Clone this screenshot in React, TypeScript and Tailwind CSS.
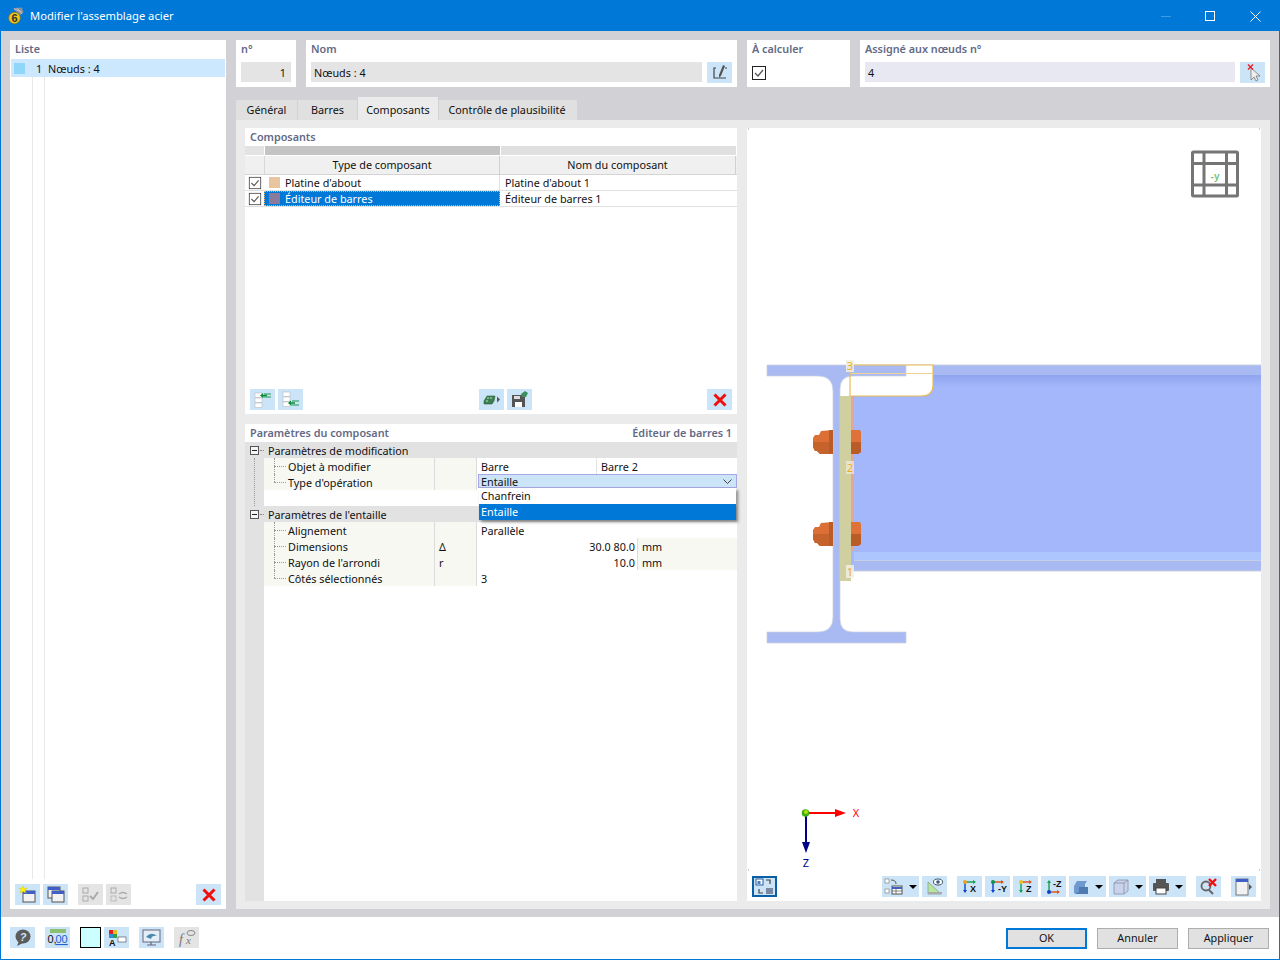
import React from "react";

const FONT = "font-['Noto_Sans','Open_Sans',sans-serif]";

function Btn({ w = "w-[25px]", h = "h-[21px]", gray, active, children }: { w?: string; h?: string; gray?: boolean; active?: boolean; children?: React.ReactNode }) {
  return (
    <div className={`${w} ${h} shrink-0 flex items-center justify-center ${gray ? "bg-[#e4e4e4]" : "bg-[#cce4f7]"} ${active ? "border-2 border-[#0b5fa5]" : ""}`}>
      {children}
    </div>
  );
}

function Ico({ children }: { children: React.ReactNode }) {
  return (
    <svg width="21" height="19" viewBox="0 0 21 19" className="block shrink-0">
      {children}
    </svg>
  );
}

const Caret = () => <span className="ml-[5px] w-0 h-0 border-l-[4px] border-r-[4px] border-t-[4px] border-l-transparent border-r-transparent border-t-black" />;

function Check({ className = "" }: { className?: string }) {
  return (
    <svg width="14" height="14" viewBox="0 0 14 14" className={`block shrink-0 ${className}`}>
      <rect x="0.5" y="0.5" width="13" height="13" fill="#fff" stroke="#222" />
      <path d="M3 7l3 3 5-6" fill="none" stroke="#555" strokeWidth="1.2" />
    </svg>
  );
}

const RedX = () => (
  <svg width="14" height="14" viewBox="0 0 14 14" className="block">
    <path d="M1.500 1.500l11 11M12.500 1.500l-11 11" stroke="#f00f0f" strokeWidth="3" />
  </svg>
);

const ListRows = ({ y }: { y: number }) => (
  <>
    <rect x="3" y={y} width="7" height="4.500" fill="#fff" stroke="#b0b0b0" strokeWidth="0.5" />
    <rect x="3" y={y + 5} width="7" height="4.500" fill="#fff" stroke="#b0b0b0" strokeWidth="0.5" />
    <rect x="3" y={y + 10} width="7" height="4.500" fill="#fff" stroke="#b0b0b0" strokeWidth="0.5" />
  </>
);

const WindowIco = ({ x, y }: { x: number; y: number }) => (
  <>
    <rect x={x} y={y} width="12" height="11" fill="#f2f2f2" stroke="#555" />
    <rect x={x} y={y} width="12" height="3" fill="#3f5fc8" />
  </>
);

function TriAxes({ a, b, c, label }: { a: string; b: string; c: string; label: string }) {
  return (
    <Ico>
      <path d="M6 5h8" stroke={b} strokeWidth="1.4" />
      <path d="M14 3l3 2-3 2z" fill={b} />
      <path d="M6 5v9" stroke={c} strokeWidth="1.4" />
      <path d="M4 13l2 3 2-3z" fill={c} />
      <circle cx="6" cy="5" r="2" fill={a} />
      <text x="11" y="15" fontSize="9" fontWeight="700" fill="#111" fontFamily="Liberation Sans, sans-serif">{label}</text>
    </Ico>
  );
}

function PropRow({ name, sym, value, second, unit, last }: { name: string; sym?: string; value?: string; second?: string; unit?: string; last?: boolean }) {
  return (
    <div className="flex h-[16px] leading-[18px] text-[#111]">
      <div className="relative w-[171px] bg-[#f7f8f1] border-r border-[#dcdcdc] pl-[24px] shrink-0">
        <span className={`absolute left-[10px] top-0 border-l border-dotted border-[#9a9a9a] ${last ? "h-[8px]" : "h-full"}`} />
        <span className="absolute left-[10px] top-[8px] w-[12px] border-t border-dotted border-[#9a9a9a]" />
        {name}
      </div>
      <div className="w-[42px] bg-[#f7f8f1] border-r border-[#dcdcdc] pl-[4px] shrink-0">{sym}</div>
      {unit ? (
        <>
          <div className="w-[160px] text-right pr-[2px] shrink-0">{value}</div>
          <div className="flex-1 bg-[#f7f8f1] border-l border-[#dcdcdc] pl-[4px]">{unit}</div>
        </>
      ) : (
        <>
          <div className={`pl-[4px] ${second ? "w-[120px] border-r border-[#e4e4e4]" : "flex-1"}`}>{value}</div>
          {second && <div className="flex-1 pl-[4px]">{second}</div>}
        </>
      )}
    </div>
  );
}

function GroupRow({ title }: { title: string }) {
  return (
    <div className="flex items-center h-[16px] shrink-0 bg-[#e2e2e2] text-[#111]">
      <span className="ml-[5px] w-[9px] h-[9px] border border-[#555] bg-[#f5f5f5] flex items-center justify-center shrink-0">
        <span className="w-[5px] h-px bg-[#222]" />
      </span>
      <span className="w-[4px] ml-px border-t border-dotted border-[#888] shrink-0" />
      <span className="ml-[4px] mt-[2px]">{title}</span>
    </div>
  );
}

function Label({ children }: { children: React.ReactNode }) {
  return <div className="text-[10.8px] font-semibold text-[#636a86] leading-[18px]">{children}</div>;
}

function Drawing() {
  return (
    <svg viewBox="747 128 514 745" width="514" height="745" className="block">
      <defs>
        <linearGradient id="webShade" x1="0" y1="0" x2="0" y2="1">
          <stop offset="0" stopColor="#8ea4ee" />
          <stop offset="1" stopColor="#a5b7fb" />
        </linearGradient>
      </defs>
      {/* beam */}
      <rect x="850" y="365" width="411" height="206" fill="#a5b7fb" />
      <rect x="906" y="365" width="355" height="10" fill="#a9baf3" />
      <rect x="933" y="375" width="328" height="12" fill="url(#webShade)" />
      <rect x="854" y="552" width="407" height="8" fill="#aec6fe" />
      <rect x="854" y="560" width="407" height="1" fill="#c6cfe6" />
      <rect x="854" y="561" width="407" height="10" fill="#a9baf3" />
      <path d="M850 571H1261" stroke="#c9cfdc" />
      <path d="M906 365H1261" stroke="#c9cfdc" />
      {/* notch */}
      <path d="M850 365H933V385Q933 396 921 396H850Z" fill="#fff" />
      {/* column */}
      <path d="M767 365H906V376H853Q840 376 840 389V619Q840 632 853 632H906V643H767V632H818Q833 632 833 617V391Q833 376 818 376H767Z" fill="#a9baf3" stroke="#c9cfdc" strokeWidth="0.7" />
      <path d="M850 373.5H933" stroke="#eed593" />
      <path d="M850 365H933V385Q933 396 921 396H850Z" fill="none" stroke="#e9bd50" strokeWidth="1.2" />
      {/* plates */}
      <rect x="851" y="396" width="3" height="155" fill="#e8a68f" />
      <rect x="840" y="396" width="11" height="185" fill="#cfcf9f" />
      {/* bolts */}
      {[430, 522].map((y) => (
        <g key={y}>
          <path d={`M833 ${y}V${y + 24}H820L817 ${y + 21}H815L813 ${y + 17}V${y + 8}L815 ${y + 5}H819L821 ${y + 1}Z`} fill="#dc6f35" />
          <path d={`M833 ${y + 12}V${y + 24}H820L817 ${y + 21}H815L813 ${y + 17}V${y + 12}Z`} fill="#c6622b" />
          <rect x="829" y={y} width="4" height="24" fill="#b95c27" />
          <path d={`M851 ${y}H860L861 ${y + 2}V${y + 22}L858 ${y + 24}H851Z`} fill="#de7238" />
          <path d={`M851 ${y + 12}H861V${y + 22}L858 ${y + 24}H851Z`} fill="#b95c27" />
        </g>
      ))}
      {/* node labels */}
      <rect x="846" y="360" width="8" height="12" fill="#f2eee0" opacity="0.85" />
      <rect x="846" y="461" width="8" height="13" fill="#f2eee0" opacity="0.7" />
      <rect x="846" y="565" width="8" height="13" fill="#f2eee0" opacity="0.85" />
      <g fill="#e8ad1e" fontSize="11" fontFamily="Noto Sans, sans-serif" textAnchor="middle">
        <text x="850" y="370">3</text>
        <text x="850" y="472">2</text>
        <text x="850" y="576">1</text>
      </g>
      {/* view cube */}
      <g stroke="#757575" strokeWidth="3" fill="none" strokeLinejoin="round">
        <rect x="1192.500" y="152" width="45" height="44" rx="1" />
        <path d="M1192 163.500H1238M1192 185H1238M1204 152V196M1226.500 152V196" />
      </g>
      <text x="1215" y="180" fontSize="10" fontWeight="700" fill="#7cc47c" textAnchor="middle" fontFamily="Liberation Sans, sans-serif">-y</text>
      {/* axes */}
      <path d="M806 813H836" stroke="#f00" strokeWidth="2" />
      <path d="M835 809L846 813L835 817Z" fill="#f00" />
      <path d="M806 813V844" stroke="#00008b" strokeWidth="2" />
      <path d="M802 842H810L806 853Z" fill="#00008b" />
      <circle cx="805.500" cy="813" r="3.800" fill="#3fae12" />
      <circle cx="806" cy="812" r="2" fill="#b5e000" />
      <text x="856" y="817" fontSize="11" fill="#f00" textAnchor="middle" fontFamily="Noto Sans, sans-serif">X</text>
      <text x="806" y="867" fontSize="11" fill="#00008b" textAnchor="middle" fontFamily="Noto Sans, sans-serif">Z</text>
      {/* corner ticks */}
      <path d="M748 129h1M1259 129h1M748 870h1M1259 870h1" stroke="#999" />
    </svg>
  );
}

function Gap({ w }: { w: string }) {
  return <div className={`${w} shrink-0`} />;
}

export default function App() {
  return (
    <div className={`${FONT} w-[1280px] h-[960px] flex flex-col bg-[#d2d1d6] border border-[#0078d7] text-[10.8px] text-[#111] overflow-hidden`}>
      {/* title bar */}
      <div className="h-[30px] shrink-0 bg-[#0078d7] flex items-center text-white">
        <svg width="16" height="18" viewBox="0 0 16 18" className="ml-[7px]">
          <path d="M5 1l9-0.500 1.500 5-4 3z" fill="#8a8f9c" />
          <path d="M6 2l8 3M9 1l5 6" stroke="#d8dce4" strokeWidth="0.6" />
          <circle cx="6.500" cy="11" r="5.800" fill="#f0c419" stroke="#8a6d10" strokeWidth="0.6" />
          <text x="6.500" y="15" fontSize="11" fontWeight="700" fill="#333" textAnchor="middle" fontFamily="Liberation Sans, sans-serif">6</text>
        </svg>
        <span className="ml-[6px] text-[11.2px] leading-none">Modifier l'assemblage acier</span>
        <div className="ml-auto flex items-center">
          <span className="w-[10px] h-px bg-[#3d9be3]" />
          <span className="ml-[34px] w-[10px] h-[10px] border border-white" />
          <svg width="11" height="11" viewBox="0 0 11 11" className="ml-[35px] mr-[18px]">
            <path d="M0.500 0.500l10 10M10.500 0.500l-10 10" stroke="#fff" strokeWidth="1" />
          </svg>
        </div>
      </div>

      {/* main */}
      <div className="flex-1 min-h-0 flex gap-[10px] pl-[9px] pr-[9px] pt-[9px] pb-[8px]">
        {/* list panel */}
        <div className="w-[216px] shrink-0 bg-white flex flex-col">
          <div className="px-[5px] h-[19px]"><Label>Liste</Label></div>
          <div className="mx-px h-[18px] bg-[#cce8ff] flex items-center">
            <span className="ml-[3px] w-[11px] h-[11px] bg-[#8fd6f8]" />
            <span className="ml-[11px] w-[6px] text-right mt-[2px]">1</span>
            <span className="ml-[6px] mt-[2px]">Nœuds : 4</span>
          </div>
          <div className="flex-1 flex pl-[22px]">
            <div className="w-[13px] border-l border-r border-[#e8e8e8] mb-[5px]" />
          </div>
          <div className="h-[25px] flex items-start gap-[3px] pl-[5px]">
            <Btn>
              <Ico>
                <WindowIco x={6} y={6} />
                <path d="M6 1l1.200 2.500L10 3 8 5l1 3-3-1.500L3 8l1-3-2-2 2.800.500z" fill="#fff200" stroke="#d8b800" strokeWidth="0.4" />
              </Ico>
            </Btn>
            <Btn>
              <Ico>
                <WindowIco x={3} y={2} />
                <WindowIco x={7} y={6} />
              </Ico>
            </Btn>
            <Gap w="w-[4px]" />
            <Btn gray>
              <Ico>
                <rect x="3" y="3" width="5" height="5" fill="none" stroke="#aaa" />
                <rect x="3" y="11" width="5" height="5" fill="none" stroke="#aaa" />
                <path d="M10 11l3 3 5-7" fill="none" stroke="#aaa" strokeWidth="2" />
              </Ico>
            </Btn>
            <Btn gray>
              <Ico>
                <rect x="3" y="3" width="5" height="5" fill="none" stroke="#aaa" />
                <rect x="3" y="11" width="5" height="5" fill="none" stroke="#bbb" />
                <path d="M11 9q4-3 8 0M11 12q4 3 8 0" fill="none" stroke="#aaa" strokeWidth="1.500" />
              </Ico>
            </Btn>
            <Gap w="w-[59px]" />
            <Btn><RedX /></Btn>
          </div>
        </div>

        {/* right side */}
        <div className="w-[1034px] shrink-0 flex flex-col">
          {/* top fields */}
          <div className="h-[47px] shrink-0 flex gap-[10px]">
            <div className="w-[60px] bg-white px-[5px]">
              <Label>n°</Label>
              <div className="mt-[4px] h-[20px] bg-[#e4e4e4] text-right pr-[5px] leading-[22px]">1</div>
            </div>
            <div className="w-[431px] bg-white px-[5px]">
              <Label>Nom</Label>
              <div className="mt-[4px] flex gap-[5px]">
                <div className="flex-1 h-[20px] bg-[#e4e4e4] pl-[3px] leading-[22px]">Nœuds : 4</div>
                <Btn>
                  <Ico>
                    <path d="M7 5H5v10h2M7 15h10" fill="none" stroke="#444" strokeWidth="1.200" />
                    <path d="M14 2l2 1-4 10-2 1.500 0-2.500z" fill="#555" />
                    <path d="M16 5h2" stroke="#444" />
                  </Ico>
                </Btn>
              </div>
            </div>
            <div className="w-[103px] bg-white px-[5px]">
              <Label>À calculer</Label>
              <Check className="mt-[8px]" />
            </div>
            <div className="w-[410px] bg-white px-[5px]">
              <Label>Assigné aux nœuds n°</Label>
              <div className="mt-[4px] flex gap-[5px]">
                <div className="flex-1 h-[20px] bg-[#e8e8f2] pl-[3px] leading-[22px]">4</div>
                <Btn>
                  <Ico>
                    <path d="M9 5v12l3-3 2 4 2-1-2-4h4z" fill="#eee" stroke="#777" strokeWidth="0.8" />
                    <path d="M6 1.500l5 5M11 1.500L6 6.500" stroke="#ee1c25" strokeWidth="1.400" />
                  </Ico>
                </Btn>
              </div>
            </div>
          </div>

          {/* tabs */}
          <div className="mt-[10px] h-[23px] shrink-0 flex items-end gap-px">
            <div className="w-[61px] h-[20px] bg-[#e0e0e0] text-center leading-[19px]">Général</div>
            <div className="w-[59px] h-[20px] bg-[#e0e0e0] text-center leading-[19px]">Barres</div>
            <div className="w-[80px] h-[23px] bg-[#ebebeb] text-center leading-[25px]">Composants</div>
            <div className="w-[138px] h-[20px] bg-[#e0e0e0] text-center leading-[19px] pr-[2px]">Contrôle de plausibilité</div>
          </div>

          {/* tab body */}
          <div className="flex-1 min-h-0 bg-[#ebebeb] flex gap-[10px] pl-[9px] pr-[9px] pt-[8px] pb-[8px]">
            <div className="w-[492px] shrink-0 flex flex-col gap-[10px]">
              {/* components */}
              <div className="h-[286px] shrink-0 bg-white flex flex-col">
                <div className="h-[18px] pl-[5px]"><Label>Composants</Label></div>
                <div className="h-[9px] flex gap-px pr-px">
                  <div className="w-[19px] bg-[#e3e3e3]" />
                  <div className="w-[235px] bg-[#c4c4c4]" />
                  <div className="flex-1 bg-[#e0e0e0]" />
                </div>
                <div className="mt-px h-[19px] flex bg-[#f0f0f0] border-b border-[#d4d4d4] leading-[17px] text-center pr-px">
                  <div className="w-[20px] border-r border-[#d8d8d8]" />
                  <div className="w-[235px] border-r border-[#d0d0d0]">Type de composant</div>
                  <div className="flex-1 border-r border-[#d0d0d0]">Nom du composant</div>
                </div>
                <div className="h-[16px] flex items-center border-b border-[#e0e0e0] pr-px">
                  <div className="w-[19px] flex justify-center"><Check className="scale-90" /></div>
                  <div className="w-[236px] h-full flex items-center border-r border-[#e0e0e0]">
                    <span className="ml-[5px] w-[11px] h-[11px] bg-[#e8c4a0]" />
                    <span className="ml-[5px] mt-[2px]">Platine d'about</span>
                  </div>
                  <div className="pl-[5px] mt-[2px]">Platine d'about 1</div>
                </div>
                <div className="h-[16px] flex items-center border-b border-[#e0e0e0] pr-px">
                  <div className="w-[19px] flex justify-center"><Check className="scale-90" /></div>
                  <div className="w-[236px] h-full flex items-center bg-[#0078d7] text-white border border-dotted border-[#f0b070]">
                    <span className="ml-[4px] w-[11px] h-[11px] bg-[#8a7a9c]" />
                    <span className="ml-[5px] mt-[2px]">Éditeur de barres</span>
                  </div>
                  <div className="pl-[5px] mt-[2px]">Éditeur de barres 1</div>
                </div>
                <div className="flex-1" />
                <div className="h-[25px] flex items-start pl-[5px] pr-[5px]">
                  <Btn>
                    <Ico>
                      <ListRows y={3} />
                      <path d="M19 4H12M19 7H11" stroke="#1a9a4a" strokeWidth="1" />
                      <path d="M11 3L8 5.500 11 8z" fill="#0d8a3a" />
                      <path d="M11 5.500h4" stroke="#0d8a3a" strokeWidth="1.500" />
                    </Ico>
                  </Btn>
                  <Gap w="w-[3px]" />
                  <Btn>
                    <Ico>
                      <ListRows y={2} />
                      <path d="M19 11H12M19 15H11" stroke="#1a9a4a" strokeWidth="1" />
                      <path d="M11 10.500L8 13l3 2.500z" fill="#0d8a3a" />
                      <path d="M11 13h4" stroke="#0d8a3a" strokeWidth="1.500" />
                    </Ico>
                  </Btn>
                  <Gap w="w-[176px]" />
                  <Btn>
                    <Ico>
                      <path d="M3 11l3-5h8l-1 5-2 3H3z" fill="#3c8050" stroke="#2a5a38" strokeWidth="0.6" />
                      <path d="M6 8h2M9 8h2M5 11h2" stroke="#bfe0c8" />
                      <path d="M16 6.500l3 3-3 3z" fill="#555" />
                    </Ico>
                  </Btn>
                  <Gap w="w-[3px]" />
                  <Btn>
                    <Ico>
                      <path d="M3 5h11l2 2v10H3z" fill="#555" />
                      <rect x="6" y="12" width="7" height="5" fill="#fff" />
                      <rect x="5" y="6" width="6" height="3" fill="#ddd" />
                      <path d="M12 4l4-3 3 2-2 4-4 0z" fill="#3c9060" />
                    </Ico>
                  </Btn>
                  <div className="flex-1" />
                  <Btn><RedX /></Btn>
                </div>
              </div>

              {/* parameters */}
              <div className="flex-1 min-h-0 bg-white flex flex-col relative">
                <div className="h-[18px] px-[5px] flex justify-between shrink-0">
                  <Label>Paramètres du composant</Label>
                  <Label>Éditeur de barres 1</Label>
                </div>
                <GroupRow title="Paramètres de modification" />
                <div className="flex shrink-0">
                  <div className="w-[19px] shrink-0 bg-[#e2e2e2] flex justify-center">
                    <span className="border-l border-dotted border-[#9a9a9a]" />
                  </div>
                  <div className="flex-1 min-w-0">
                    <PropRow name="Objet à modifier" value="Barre" second="Barre 2" />
                    <PropRow name="Type d'opération" last />
                    <div className="h-[16px]" />
                  </div>
                </div>
                <GroupRow title="Paramètres de l'entaille" />
                <div className="flex flex-1 min-h-0">
                  <div className="w-[19px] shrink-0 bg-[#e2e2e2]" />
                  <div className="flex-1 min-w-0">
                    <PropRow name="Alignement" value="Parallèle" />
                    <PropRow name="Dimensions" sym="Δ" value="30.0 80.0" unit="mm" />
                    <PropRow name="Rayon de l'arrondi" sym="r" value="10.0" unit="mm" />
                    <PropRow name="Côtés sélectionnés" value="3" last />
                  </div>
                </div>
                {/* open dropdown */}
                <div className="absolute left-[233px] top-[50px] w-[259px] z-10">
                  <div className="h-[14px] bg-[#cce4f7] border border-[#a7a7e6] flex items-center pl-[2px] justify-between pr-[4px] leading-[14px]">
                    <span className="mt-[1px]">Entaille</span>
                    <svg width="9" height="5" viewBox="0 0 9 5"><path d="M0.500 0.500l4 4 4-4" fill="none" stroke="#444" /></svg>
                  </div>
                  <div className="ml-px mr-px bg-white shadow-[2px_2px_3px_rgba(0,0,0,0.45)] leading-[16px]">
                    <div className="h-[16px] pl-[2px]">Chanfrein</div>
                    <div className="h-[16px] pl-[2px] bg-[#0078d7] text-white">Entaille</div>
                  </div>
                </div>
              </div>
            </div>

            {/* viewer */}
            <div className="w-[514px] shrink-0 bg-white flex flex-col">
              <Drawing />
              <div className="mt-[3px] h-[21px] flex items-start pl-[5px]">
                <Btn active>
                  <svg width="19" height="17" viewBox="0 0 19 17" className="block shrink-0">
                    <rect x="1" y="1" width="7" height="6" fill="#fff" stroke="#2a5a9e" />
                    <rect x="2.500" y="3" width="3" height="3" fill="#4a7cc8" />
                    <rect x="11" y="10" width="7" height="6" fill="#7b8aa0" />
                    <path d="M11 2h4v4M8 15H4v-4" fill="none" stroke="#444" strokeWidth="1.200" />
                  </svg>
                </Btn>
                <Gap w="w-[105px]" />
                <Btn w="w-[37px]">
                  <svg width="20" height="19" viewBox="0 0 20 19">
                    <rect x="1" y="2" width="4" height="4" fill="#fff" stroke="#777" strokeWidth="0.6" />
                    <rect x="1" y="12" width="4" height="4" fill="#fff" stroke="#777" strokeWidth="0.6" />
                    <rect x="8" y="9" width="10" height="8" fill="#fff" stroke="#555" />
                    <path d="M8 11h10" stroke="#3f5fc8" strokeWidth="2" />
                    <path d="M8 14h10M12 11v6" stroke="#555" strokeWidth="0.7" />
                    <path d="M7 3q5 0 5 4" fill="none" stroke="#555" />
                  </svg>
                  <Caret />
                </Btn>
                <Gap w="w-[3px]" />
                <Btn>
                  <Ico>
                    <path d="M4 5v12h13z" fill="#b6e6a0" stroke="#8aa080" strokeWidth="0.8" />
                    <path d="M4 16h14" stroke="#aaa" strokeWidth="2" />
                    <ellipse cx="14" cy="5" rx="4.500" ry="3" fill="#fff" stroke="#456" />
                    <circle cx="14" cy="5" r="1.800" fill="#345a80" />
                  </Ico>
                </Btn>
                <Gap w="w-[10px]" />
                <Btn><TriAxes a="#f0a020" b="#10a050" c="#0a3fd0" label="X" /></Btn>
                <Gap w="w-[3px]" />
                <Btn><TriAxes a="#109050" b="#e05010" c="#0a3fd0" label="-Y" /></Btn>
                <Gap w="w-[3px]" />
                <Btn><TriAxes a="#f0c020" b="#e05010" c="#10a050" label="Z" /></Btn>
                <Gap w="w-[3px]" />
                <Btn>
                  <Ico>
                    <path d="M6 15V5" stroke="#10a050" strokeWidth="1.400" />
                    <path d="M4 6l2-3 2 3z" fill="#10a050" />
                    <path d="M6 15h9" stroke="#e05010" strokeWidth="1.400" />
                    <path d="M14 13l3 2-3 2z" fill="#e05010" />
                    <circle cx="6" cy="15" r="2" fill="#0a3fd0" />
                    <text x="10" y="10" fontSize="9" fontWeight="700" fill="#111" fontFamily="Liberation Sans, sans-serif">-Z</text>
                  </Ico>
                </Btn>
                <Gap w="w-[3px]" />
                <Btn w="w-[37px]">
                  <svg width="18" height="18" viewBox="0 0 18 18">
                    <path d="M2 8l3-5h10l-2 3v3H7v6H2z" fill="#6f9ad0" />
                    <path d="M7 9h9v7H2l5-2z" fill="#4f7ab0" />
                  </svg>
                  <Caret />
                </Btn>
                <Gap w="w-[3px]" />
                <Btn w="w-[37px]">
                  <svg width="18" height="18" viewBox="0 0 18 18" fill="#c9d3ea" stroke="#8a8fa8" strokeWidth="0.8">
                    <path d="M2 5l4-3h10v11l-4 3H2z" />
                    <path d="M2 5h10v11M12 5l4-3" fill="none" />
                  </svg>
                  <Caret />
                </Btn>
                <Gap w="w-[3px]" />
                <Btn w="w-[37px]">
                  <svg width="18" height="17" viewBox="0 0 18 17">
                    <rect x="4" y="1" width="10" height="4" fill="#555" />
                    <rect x="1" y="5" width="16" height="8" rx="1" fill="#555" />
                    <rect x="4" y="10" width="10" height="6" fill="#fff" stroke="#444" />
                  </svg>
                  <Caret />
                </Btn>
                <Gap w="w-[10px]" />
                <Btn>
                  <Ico>
                    <circle cx="8" cy="9" r="4.500" fill="none" stroke="#666" strokeWidth="1.800" />
                    <path d="M11 13l4 4" stroke="#666" strokeWidth="2" />
                    <path d="M11 2l7 7M18 2l-7 7" stroke="#f00f0f" strokeWidth="2.400" />
                  </Ico>
                </Btn>
                <Gap w="w-[10px]" />
                <Btn>
                  <Ico>
                    <rect x="3" y="2" width="12" height="16" fill="#f2f2f2" stroke="#777" />
                    <rect x="3" y="2" width="12" height="3" fill="#3f5fc8" />
                    <path d="M16 7l3 3-3 3z" fill="#555" />
                  </Ico>
                </Btn>
              </div>
            </div>
          </div>
        </div>
      </div>

      {/* footer */}
      <div className="h-[42px] shrink-0 bg-white flex items-center pl-[9px] pr-[10px]">
        <div className="flex items-center mb-[2px]">
          <Btn>
            <Ico>
              <ellipse cx="11" cy="8.500" rx="7.500" ry="7" fill="#5c5c5c" />
              <path d="M7 13l-2 5 6-3z" fill="#5c5c5c" />
              <text x="11" y="13" fontSize="11" fontWeight="700" fontStyle="italic" fill="#cce4f7" textAnchor="middle" fontFamily="Liberation Sans, sans-serif">?</text>
            </Ico>
          </Btn>
          <Gap w="w-[10px]" />
          <Btn>
            <svg width="21" height="19" viewBox="0 0 21 19">
              <rect x="3" y="1" width="16" height="4" fill="#8cc070" />
              <text x="0.500" y="15" fontSize="11" fill="#111" fontFamily="Liberation Sans, sans-serif">0,</text>
              <text x="8.500" y="15" fontSize="11" fill="#2060d0" fontFamily="Liberation Sans, sans-serif" textDecoration="underline">00</text>
            </svg>
          </Btn>
          <Gap w="w-[10px]" />
          <div className="w-[21px] h-[21px] border border-black bg-[#ccffff] shrink-0" />
          <Gap w="w-[3px]" />
          <Btn>
            <Ico>
              <rect x="3" y="2" width="4" height="4" fill="#e02020" />
              <rect x="7" y="2" width="4" height="4" fill="#e0c020" />
              <rect x="3" y="6" width="4" height="4" fill="#3090e0" />
              <rect x="7" y="6" width="4" height="4" fill="#30a040" />
              <text x="3" y="18" fontSize="9" fontWeight="700" fill="#111" fontFamily="Liberation Sans, sans-serif">A</text>
              <rect x="12" y="9" width="8" height="5" fill="#fff" stroke="#445" strokeWidth="0.6" />
            </Ico>
          </Btn>
          <Gap w="w-[10px]" />
          <Btn>
            <Ico>
              <rect x="2" y="2" width="17" height="12" fill="#e4eef8" stroke="#667" />
              <path d="M5 9q5-6 11-1-5-1-6 3z" fill="#4a8aa8" />
              <path d="M10 14v3M6 17h9" stroke="#667" strokeWidth="1.200" />
            </Ico>
          </Btn>
          <Gap w="w-[10px]" />
          <Btn gray>
            <Ico>
              <text x="3" y="16" fontSize="14" fontStyle="italic" fill="#777" fontFamily="Liberation Serif, serif">f</text>
              <text x="10" y="16" fontSize="11" fontStyle="italic" fill="#777" fontFamily="Liberation Serif, serif">x</text>
              <ellipse cx="15" cy="5" rx="4" ry="2.500" fill="none" stroke="#888" />
            </Ico>
          </Btn>
        </div>
        <div className="flex-1" />
        <div className="w-[81px] h-[21px] border-2 border-[#0078d7] bg-[#e1e1e1] flex items-center justify-center">OK</div>
        <Gap w="w-[10px]" />
        <div className="w-[81px] h-[21px] border border-[#adadad] bg-[#e1e1e1] flex items-center justify-center">Annuler</div>
        <Gap w="w-[10px]" />
        <div className="w-[81px] h-[21px] border border-[#adadad] bg-[#e1e1e1] flex items-center justify-center">Appliquer</div>
      </div>
    </div>
  );
}
